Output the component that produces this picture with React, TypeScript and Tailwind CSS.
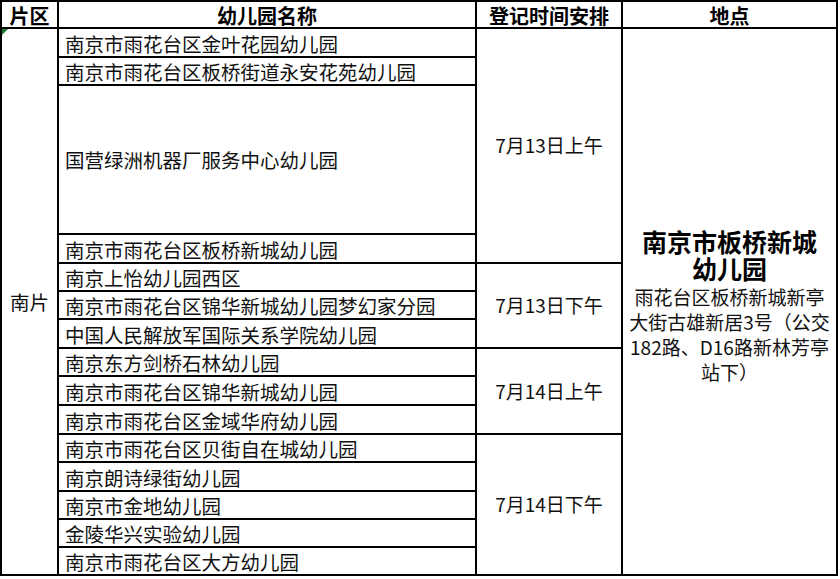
import React from "react";

const FONT = "font-['Noto_Sans_CJK_SC','Noto_Sans',sans-serif]";

type Group = { time: string; names: string[] };

const groups: Group[] = [
  {
    time: "7月13日上午",
    names: [
      "南京市雨花台区金叶花园幼儿园",
      "南京市雨花台区板桥街道永安花苑幼儿园",
      "国营绿洲机器厂服务中心幼儿园",
      "南京市雨花台区板桥新城幼儿园",
    ],
  },
  {
    time: "7月13日下午",
    names: [
      "南京上怡幼儿园西区",
      "南京市雨花台区锦华新城幼儿园梦幻家分园",
      "中国人民解放军国际关系学院幼儿园",
    ],
  },
  {
    time: "7月14日上午",
    names: [
      "南京东方剑桥石林幼儿园",
      "南京市雨花台区锦华新城幼儿园",
      "南京市雨花台区金域华府幼儿园",
    ],
  },
  {
    time: "7月14日下午",
    names: [
      "南京市雨花台区贝街自在城幼儿园",
      "南京朗诗绿街幼儿园",
      "南京市金地幼儿园",
      "金陵华兴实验幼儿园",
      "南京市雨花台区大方幼儿园",
    ],
  },
];

const spanClass: Record<number, string> = {
  3: "row-span-3",
  4: "row-span-4",
  5: "row-span-5",
};

function NameCell({ name, tall }: { name: string; tall?: boolean }) {
  return (
    <div
      className={`col-start-2 bg-white flex pl-[6px] text-[19.5px] leading-[20px] text-[#111] whitespace-nowrap ${
        tall ? "items-center" : "items-end pb-[2px]"
      }`}
    >
      {name}
    </div>
  );
}

export default function App() {
  let first = true;
  return (
    <div className={`w-[840px] h-[579px] bg-white ${FONT}`}>
      <div className="w-[838px] grid grid-cols-[55px_416px_144px_213px] grid-rows-[25px_27px_26px_147px_27px_26px_26px_27px_26px_27px_27px_26px_27px_26px_26px_26px] gap-[2px] p-[2px] bg-black">
        {/* header */}
        <div className="bg-white flex items-center justify-center pt-[2px] text-[20px] font-bold text-black">片区</div>
        <div className="bg-white flex items-center justify-center pt-[2px] text-[20px] font-bold text-black">幼儿园名称</div>
        <div className="bg-white flex items-center justify-center pt-[2px] text-[20px] font-bold text-black">登记时间安排</div>
        <div className="bg-white flex items-center justify-center pt-[2px] text-[20px] font-bold text-black">地点</div>

        {groups.map((g, gi) => (
          <React.Fragment key={g.time}>
            {g.names.map((n, ni) => {
              const cells: React.ReactNode[] = [];
              if (first) {
                first = false;
                cells.push(
                  <div
                    key="area"
                    className="relative col-start-1 row-span-15 bg-white flex items-center justify-center text-[19.5px] text-[#111]"
                  >
                    <span className="absolute left-0 top-0 w-0 h-0 border-t-[6px] border-r-[6px] border-t-[#1e7a2e] border-r-transparent" />
                    南片
                  </div>
                );
              }
              cells.push(<NameCell key={n} name={n} tall={gi === 0 && ni === 2} />);
              if (ni === 0) {
                cells.push(
                  <div
                    key={g.time}
                    className={`col-start-3 ${spanClass[g.names.length]} bg-white flex items-center justify-center text-[19px] text-[#111]`}
                  >
                    {g.time}
                  </div>
                );
              }
              if (gi === 0 && ni === 0) {
                cells.push(
                  <div
                    key="place"
                    className="col-start-4 row-span-15 bg-white flex flex-col items-center justify-center pt-[8px] text-center text-[#111]"
                  >
                    <div className="h-[27px] flex items-center text-[25px] leading-[25px] font-bold text-black">南京市板桥新城</div>
                    <div className="h-[27px] flex items-center text-[25px] leading-[25px] font-bold text-black">幼儿园</div>
                    <div className="mt-[2px] text-[19px] leading-[25px]">
                      雨花台区板桥新城新亭
                      <br />
                      大街古雄新居3号（公交
                      <br />
                      182路、D16路新林芳亭
                      <br />
                      站下）
                    </div>
                  </div>
                );
              }
              return cells;
            })}
          </React.Fragment>
        ))}
      </div>
    </div>
  );
}
